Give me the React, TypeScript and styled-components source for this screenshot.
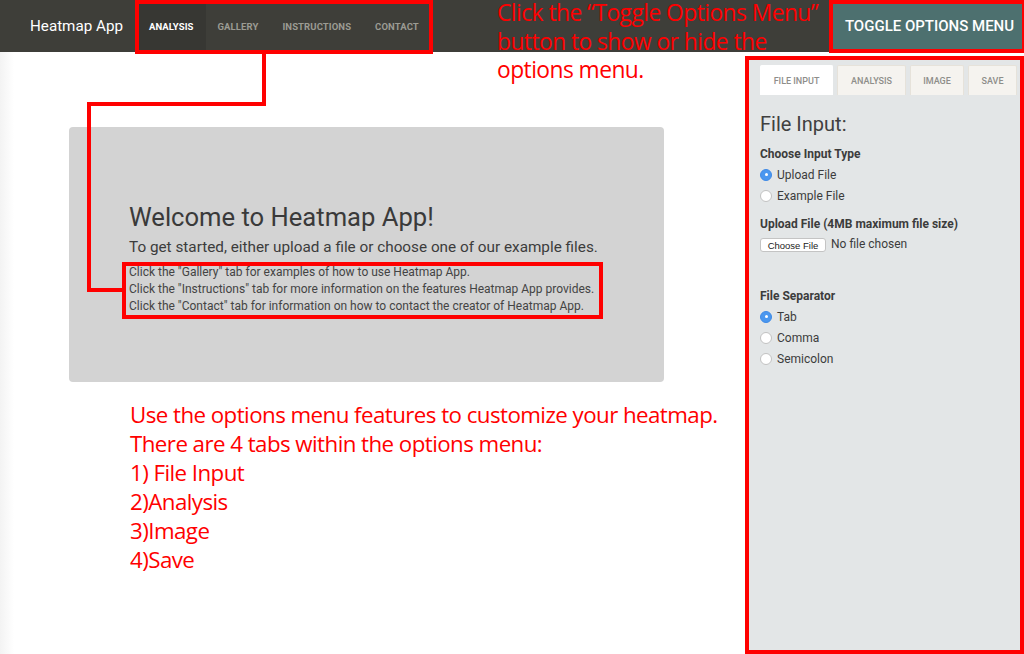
import React from "react";
import styled, { createGlobalStyle } from "styled-components";

const GlobalStyle = createGlobalStyle`
  html, body { margin: 0; padding: 0; background: #ffffff; }
  body { font-family: Roboto, "Liberation Sans", Arial, sans-serif; }
  * { box-sizing: border-box; }
`;

const Page = styled.div`
  position: relative;
  width: 1024px;
  height: 654px;
  overflow: hidden;
  background: linear-gradient(to right, #f3f3f3 0px, #ffffff 14px);
`;

const Navbar = styled.nav`
  display: flex;
  align-items: stretch;
  height: 52px;
  background: #3e3e39;
`;

const Brand = styled.div`
  display: flex;
  align-items: center;
  width: 137px;
  padding: 0 0 0 30px;
  color: #ffffff;
  font-size: 15.2px;
  font-weight: 400;
  white-space: nowrap;
`;

const NavList = styled.div`
  display: flex;
  align-items: stretch;
`;

const NavItem = styled.div<{ $active?: boolean }>`
  display: flex;
  align-items: center;
  padding: 0 12px;
  font-size: 9.5px;
  font-weight: 700;
  letter-spacing: 0.1px;
  text-transform: uppercase;
  color: ${(p) => (p.$active ? "#ffffff" : "#9b9b93")};
  background: ${(p) => (p.$active ? "#373733" : "transparent")};
`;

const Spacer = styled.div`
  flex: 1;
`;

const ToggleButton = styled.button`
  width: 191px;
  border: none;
  margin: 0;
  background: #4d706f;
  color: #ffffff;
  font-family: Roboto, "Liberation Sans", Arial, sans-serif;
  font-size: 15px;
  font-weight: 500;
  text-transform: uppercase;
  padding: 0 0 0 2px;
`;

const Body = styled.div`
  display: flex;
  align-items: flex-start;
`;

const Main = styled.main`
  flex: 1;
  padding: 75px 0 0 69px;
`;

const Jumbotron = styled.section`
  width: 595px;
  height: 255px;
  background: #d3d3d3;
  border-radius: 4px;
  padding: 76px 0 0 60px;
  color: #3c3c3c;
`;

const Title = styled.h1`
  margin: 0;
  font-size: 25.6px;
  line-height: 28px;
  font-weight: 400;
  color: #3a3a3a;
`;

const Lead = styled.p`
  margin: 5px 0 0;
  font-size: 15.3px;
  line-height: 22px;
  font-weight: 400;
  color: #3c3c3c;
`;

const Hints = styled.div`
  margin-top: 6px;
  font-size: 12px;
  line-height: 17px;
  color: #444444;
`;

const Note = styled.div`
  margin: 18px 0 0 61px;
  font-family: "Open Sans", "Noto Sans", sans-serif;
  font-size: 22.3px;
  line-height: 29px;
  letter-spacing: -0.55px;
  color: #ff0000;
`;

const Sidebar = styled.aside`
  width: 278px;
  height: 598px;
  margin-top: 4px;
  background: #e3e6e7;
  padding: 9px 0 0 14px;
`;

const Tabs = styled.div`
  display: flex;
  gap: 4px;
`;

const Tab = styled.div<{ $active?: boolean; $w: number }>`
  width: ${(p) => p.$w}px;
  height: 30px;
  display: flex;
  align-items: center;
  justify-content: center;
  font-size: 9px;
  font-weight: 500;
  text-transform: uppercase;
  color: #8e8e8a;
  background: ${(p) => (p.$active ? "#ffffff" : "#f5f3ef")};
  border: 1px solid ${(p) => (p.$active ? "#ffffff" : "#e6e2da")};
  border-bottom: none;
  border-radius: 2px 2px 0 0;
`;

const PanelTitle = styled.h2`
  margin: 17px 0 0;
  font-size: 20px;
  line-height: 24px;
  font-weight: 400;
  color: #404040;
`;

const GroupLabel = styled.div<{ $top: number }>`
  margin-top: ${(p) => p.$top}px;
  font-size: 12px;
  line-height: 16px;
  font-weight: 700;
  color: #3c3c3c;
`;

const RadioRow = styled.label`
  display: flex;
  align-items: center;
  gap: 5px;
  height: 21px;
  font-size: 12px;
  color: #3c3c3c;
`;

const RadioDot = styled.span<{ $checked?: boolean }>`
  width: 12px;
  height: 12px;
  border-radius: 50%;
  background: ${(p) => (p.$checked ? "#4a97ef" : "#ffffff")};
  border: 1px solid ${(p) => (p.$checked ? "#3f8ae6" : "#c2c2c2")};
  display: flex;
  align-items: center;
  justify-content: center;
  &::after {
    content: "";
    width: 3px;
    height: 3px;
    border-radius: 50%;
    background: ${(p) => (p.$checked ? "#ffffff" : "transparent")};
  }
`;

const RadioList = styled.div`
  margin-top: 2px;
`;

const FileRow = styled.div`
  display: flex;
  align-items: center;
  gap: 5px;
  margin-top: 6px;
`;

const FileButton = styled.span`
  display: inline-flex;
  align-items: center;
  justify-content: center;
  width: 66px;
  height: 14px;
  background: #ffffff;
  border: 1px solid #c4c4c4;
  border-radius: 3px;
  font-family: "Liberation Sans", Arial, sans-serif;
  font-size: 9.5px;
  color: #222222;
`;

const FileStatus = styled.span`
  font-size: 12px;
  color: #3c3c3c;
  margin-top: -3px;
`;

const AnnotBox = styled.div`
  position: absolute;
  border: 4px solid #ff0000;
  pointer-events: none;
`;

const Wire = styled.div`
  position: absolute;
  background: #ff0000;
`;

const TopNote = styled.div`
  position: absolute;
  left: 497px;
  top: -1px;
  width: 332px;
  font-family: "Open Sans", "Noto Sans", sans-serif;
  font-size: 22.8px;
  line-height: 28.5px;
  letter-spacing: -0.55px;
  color: #ff0000;
`;

const Radio = ({ checked, label }: { checked?: boolean; label: string }) => (
  <RadioRow>
    <RadioDot $checked={checked} />
    {label}
  </RadioRow>
);

export default function App() {
  return (
    <>
      <GlobalStyle />
      <Page>
        <Navbar>
          <Brand>Heatmap App</Brand>
          <NavList>
            <NavItem $active>Analysis</NavItem>
            <NavItem>Gallery</NavItem>
            <NavItem>Instructions</NavItem>
            <NavItem>Contact</NavItem>
          </NavList>
          <Spacer />
          <ToggleButton>Toggle Options Menu</ToggleButton>
        </Navbar>
        <Body>
          <Main>
            <Jumbotron>
              <Title>Welcome to Heatmap App!</Title>
              <Lead>To get started, either upload a file or choose one of our example files.</Lead>
              <Hints>
                <div>Click the "Gallery" tab for examples of how to use Heatmap App.</div>
                <div>Click the "Instructions" tab for more information on the features Heatmap App provides.</div>
                <div>Click the "Contact" tab for information on how to contact the creator of Heatmap App.</div>
              </Hints>
            </Jumbotron>
            <Note>
              <div>Use the options menu features to customize your heatmap.</div>
              <div>There are 4 tabs within the options menu:</div>
              <div>1) File Input</div>
              <div>2)Analysis</div>
              <div>3)Image</div>
              <div>4)Save</div>
            </Note>
          </Main>
          <Sidebar>
            <Tabs>
              <Tab $active $w={73}>File Input</Tab>
              <Tab $w={69}>Analysis</Tab>
              <Tab $w={54}>Image</Tab>
              <Tab $w={49}>Save</Tab>
            </Tabs>
            <PanelTitle>File Input:</PanelTitle>
            <GroupLabel $top={10}>Choose Input Type</GroupLabel>
            <RadioList>
              <Radio checked label="Upload File" />
              <Radio label="Example File" />
            </RadioList>
            <GroupLabel $top={10}>Upload File (4MB maximum file size)</GroupLabel>
            <FileRow>
              <FileButton>Choose File</FileButton>
              <FileStatus>No file chosen</FileStatus>
            </FileRow>
            <GroupLabel $top={36}>File Separator</GroupLabel>
            <RadioList>
              <Radio checked label="Tab" />
              <Radio label="Comma" />
              <Radio label="Semicolon" />
            </RadioList>
          </Sidebar>
        </Body>

        <TopNote>
          Click the “Toggle Options Menu” button to show or hide the options menu.
        </TopNote>
        <AnnotBox style={{ left: 135, top: 0, width: 298, height: 54 }} />
        <AnnotBox style={{ left: 829, top: 0, width: 197, height: 53 }} />
        <AnnotBox style={{ left: 745, top: 56, width: 279, height: 598 }} />
        <AnnotBox style={{ left: 122, top: 262, width: 481, height: 57 }} />
        <Wire style={{ left: 262, top: 53, width: 4, height: 53 }} />
        <Wire style={{ left: 87, top: 102, width: 179, height: 4 }} />
        <Wire style={{ left: 87, top: 102, width: 4, height: 190 }} />
        <Wire style={{ left: 87, top: 288, width: 37, height: 4 }} />
      </Page>
    </>
  );
}
